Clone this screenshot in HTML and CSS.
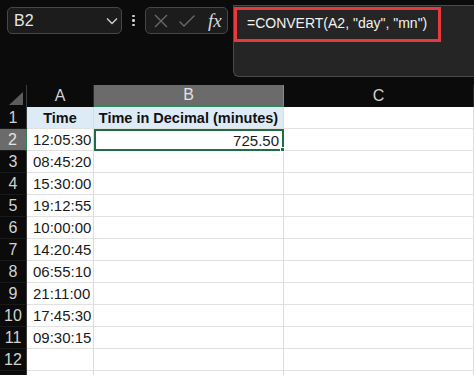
FILE: index.html
```html
<!DOCTYPE html>
<html>
<head>
<meta charset="utf-8">
<link rel="stylesheet" href="styles.css">
</head>
<body>
<div class="app">
  <div class="topbar">
    <div class="namebox">
      <span class="ref">B2</span>
      <svg class="chev" width="12" height="8" viewBox="0 0 12 8"><path d="M1 1.5 L6 6.5 L11 1.5" fill="none" stroke="#cfcfcf" stroke-width="1.4"/></svg>
    </div>
    <div class="dots"><i></i><i></i><i></i></div>
    <div class="fxbox">
      <svg width="16" height="16" viewBox="0 0 16 16"><path d="M2 2 L14 14 M14 2 L2 14" stroke="#6a6a6a" stroke-width="1.3" fill="none"/></svg>
      <svg width="18" height="16" viewBox="0 0 18 16"><path d="M1.5 8.5 L6 13 L16.5 2.5" stroke="#6a6a6a" stroke-width="1.3" fill="none"/></svg>
      <span class="fx">fx</span>
    </div>
    <div class="formulabar">
      <div class="hl">=CONVERT(A2, "day", "mn")</div>
    </div>
  </div>
  <div class="sheet">
    <div class="corner"><span class="tri"></span></div>
    <div class="ch">A</div>
    <div class="ch sel">B</div>
    <div class="ch">C</div>

    <div class="rh">1</div><div class="c hd">Time</div><div class="c hd">Time in Decimal (minutes)</div><div class="c"></div>
    <div class="rh sel">2</div><div class="c">12:05:30</div><div class="c num active">725.50<span class="handle"></span></div><div class="c"></div>
    <div class="rh">3</div><div class="c">08:45:20</div><div class="c"></div><div class="c"></div>
    <div class="rh">4</div><div class="c">15:30:00</div><div class="c"></div><div class="c"></div>
    <div class="rh">5</div><div class="c">19:12:55</div><div class="c"></div><div class="c"></div>
    <div class="rh">6</div><div class="c">10:00:00</div><div class="c"></div><div class="c"></div>
    <div class="rh">7</div><div class="c">14:20:45</div><div class="c"></div><div class="c"></div>
    <div class="rh">8</div><div class="c">06:55:10</div><div class="c"></div><div class="c"></div>
    <div class="rh">9</div><div class="c">21:11:00</div><div class="c"></div><div class="c"></div>
    <div class="rh">10</div><div class="c">17:45:30</div><div class="c"></div><div class="c"></div>
    <div class="rh">11</div><div class="c">09:30:15</div><div class="c"></div><div class="c"></div>
    <div class="rh">12</div><div class="c"></div><div class="c"></div><div class="c"></div>
    <div class="rh"></div><div class="c"></div><div class="c"></div><div class="c"></div>
  </div>
</div>
</body>
</html>
```
FILE: styles.css
```css
* { box-sizing: border-box; }
html, body { margin: 0; padding: 0; }
body {
  background: #0b0b0b;
  width: 474px;
  height: 375px;
  overflow: hidden;
  font-family: "Liberation Sans", Arial, sans-serif;
}
.app { width: 474px; }
.topbar {
  display: flex;
  align-items: flex-start;
  height: 85px;
  padding: 7px 0 0 7px;
}
.namebox {
  width: 115px;
  height: 27px;
  border: 1px solid #474747;
  border-radius: 5px;
  background: #1c1c1c;
  display: flex;
  align-items: center;
  justify-content: space-between;
  padding: 0 3px 0 6px;
  color: #e6e6e6;
  font-size: 16px;
}
.dots {
  width: 23px;
  height: 27px;
  display: flex;
  flex-direction: column;
  align-items: center;
  justify-content: center;
  gap: 2px;
}
.dots i {
  display: block;
  width: 2.5px;
  height: 2.5px;
  border-radius: 50%;
  background: #d0d0d0;
}
.fxbox {
  width: 83px;
  height: 27px;
  border: 1px solid #474747;
  border-radius: 5px;
  background: #1c1c1c;
  display: flex;
  align-items: center;
  gap: 9px;
  padding: 0 0 0 7px;
}
.fx {
  font-family: "Liberation Serif", "Times New Roman", serif;
  font-style: italic;
  font-size: 19px;
  color: #d8d8d8;
  margin-left: 3px;
}
.formulabar {
  margin-left: 5px;
  margin-top: -2px;
  flex: 1;
  height: 72px;
  border: 1px solid #4a4a4a;
  border-right: none;
  border-radius: 0 0 0 6px;
  background: #252525;
}
.hl {
  margin: 1px 0 0 0;
  width: 207px;
  height: 35px;
  border: 3px solid #e8393f;
  color: #f2f2f2;
  font-size: 14px;
  padding: 5px 0 0 10px;
  white-space: nowrap;
}
.sheet {
  display: grid;
  grid-template-columns: 27px 67px 190px 190px;
  grid-auto-rows: 22px;
  background: #ffffff;
}
.corner {
  background: #0b0b0b;
  border-right: 1px solid #3c3c3c;
  position: relative;
}
.tri {
  position: absolute;
  right: 3px;
  bottom: 2px;
  width: 0;
  height: 0;
  border-left: 14px solid transparent;
  border-bottom: 13px solid #5c5c5c;
}
.ch {
  background: #0b0b0b;
  color: #d2d2d2;
  font-size: 16px;
  display: flex;
  align-items: center;
  justify-content: center;
  border-right: 1px solid #2a2a2a;
}
.ch.sel {
  background: #6b6b6b;
  color: #e2e2e2;
  border-bottom: 2px solid #2d8a5c;
  border-right: 1px solid #8a8a8a;
}
.rh {
  background: #0b0b0b;
  color: #d2d2d2;
  font-size: 16px;
  display: flex;
  align-items: center;
  justify-content: center;
  border-right: 1px solid #3c3c3c;
  border-bottom: 1px solid #1a1a1a;
}
.rh.sel {
  background: #6b6b6b;
  color: #e2e2e2;
  border-right: 2px solid #2d8a5c;
}
.c {
  background: #ffffff;
  border-right: 1px solid #dcdcdc;
  border-bottom: 1px solid #e1e1e1;
  color: #1a1a1a;
  font-size: 15px;
  display: flex;
  align-items: center;
  padding-left: 6px;
  white-space: nowrap;
  overflow: visible;
  position: relative;
}
.c.hd {
  background: #ddebf7;
  font-weight: bold;
  font-size: 14.5px;
  justify-content: center;
  padding-left: 0;
  color: #111;
}
.c.num {
  justify-content: flex-end;
  padding-right: 3px;
}
.c.active {
  border: 2px solid #1f6e43;
}
.handle {
  position: absolute;
  right: -4px;
  bottom: -4px;
  width: 6px;
  height: 6px;
  background: #1f6e43;
  border: 1px solid #ffffff;
}
```
